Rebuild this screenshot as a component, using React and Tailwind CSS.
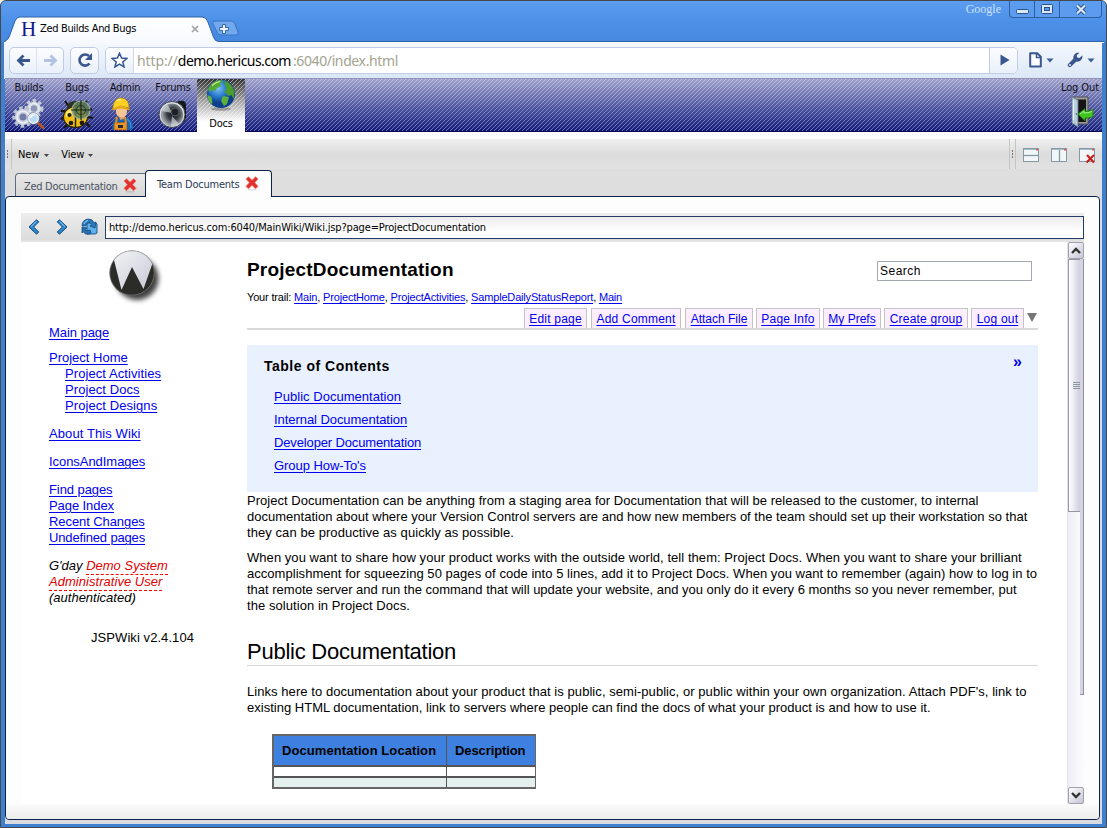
import React from 'react';

/* ---------- icons ---------- */

function Gears() {
  return (
    <svg width="34" height="32" viewBox="0 0 34 32">
      <circle cx="22" cy="10.500" r="7.200" fill="none" stroke="#c3cad8" strokeWidth="4.500" strokeDasharray="3 2.400" />
      <circle cx="22" cy="10.500" r="5" fill="#8c95b4" stroke="#d3d9e4" strokeWidth="3.600" />
      <circle cx="22" cy="10.500" r="5" fill="none" stroke="#f1f4f8" strokeWidth="1" />
      <circle cx="11" cy="19" r="8.600" fill="none" stroke="#b9c1d1" strokeWidth="4.500" strokeDasharray="3.400 2.700" />
      <circle cx="11" cy="19" r="5.800" fill="#727ca8" stroke="#cdd4e0" strokeWidth="4.600" />
      <circle cx="11" cy="19" r="6" fill="none" stroke="#f1f4f8" strokeWidth="1.200" />
      <path d="M25.500 24.500l5.500 5" stroke="#b0562a" strokeWidth="3" strokeLinecap="round" />
      <circle cx="21.500" cy="20.500" r="5" fill="#b9dcf5" stroke="#f4f7fa" strokeWidth="1.600" />
      <circle cx="21.500" cy="20.500" r="5.900" fill="none" stroke="#5d6480" strokeWidth=".5" />
      <path d="M18.500 20a3 3 0 0 1 4-2.500" stroke="#fff" strokeWidth="1.400" fill="none" />
    </svg>
  );
}

function Ladybug() {
  return (
    <svg width="34" height="32" viewBox="0 0 34 32">
      <path d="M5 3l4 6M27 3l-3 4M1 13h7M1 21l6-2M4 30l5-5M26 25l4 4M28 19l5 1M28 12l4-1" stroke="#15150c" strokeWidth="2" fill="none" />
      <ellipse cx="15" cy="9" rx="8" ry="6" fill="#2c3524" />
      <ellipse cx="15.500" cy="19" rx="12" ry="10.500" fill="#f0be16" stroke="#2d260b" strokeWidth="1.200" />
      <path d="M6 15c2-4 6-5 8-4v6l-8 2z" fill="#fbe973" />
      <path d="M15.500 8v22" stroke="#262009" strokeWidth="1.500" />
      <circle cx="9.500" cy="17" r="2.100" fill="#211c09" />
      <circle cx="11" cy="25" r="2.300" fill="#211c09" />
      <circle cx="22" cy="25" r="2.400" fill="#211c09" />
      <circle cx="21" cy="12" r="9" fill="#5f8058" fillOpacity=".85" stroke="#9db396" strokeWidth="1.200" />
      <path d="M21 2v20M11 12h20" stroke="#18200f" strokeWidth="1.100" />
      <circle cx="21" cy="12" r="4.500" fill="none" stroke="#263521" strokeWidth="1.100" />
    </svg>
  );
}

function Worker() {
  return (
    <svg className="-ml-[6px]" width="24" height="34" viewBox="0 0 24 34">
      <path d="M2 33c0-8 2-12 7-13h7c5 1 7 6 7 11l-2 2z" fill="#1763b5" />
      <path d="M17 22q4 3 4 9" stroke="#3f8fdc" strokeWidth="1.200" fill="none" />
      <path d="M4 26l13-1v8H4z" fill="#e8952c" stroke="#8a4a12" strokeWidth=".6" />
      <path d="M7 20l-1 6M15 20l1 6" stroke="#e08b24" strokeWidth="2" />
      <path d="M8 28h5v3H8z" fill="#2a2a33" />
      <path d="M9 18h6l-1 4-4 1z" fill="#dd9a60" />
      <ellipse cx="11.500" cy="14" rx="5.600" ry="6.600" fill="#f5c596" />
      <path d="M3 12C3 4 7 1 11 1s8 3 8 10l-8-2z" fill="#fbd025" stroke="#b98606" strokeWidth=".7" />
      <path d="M2 12q9-5 18 0l-1 1.500q-8-4-16 0z" fill="#e8a90d" />
      <path d="M7 4q2-2 4-1.500" stroke="#fff3a0" strokeWidth="1.500" fill="none" />
    </svg>
  );
}

function Speaker() {
  return (
    <svg width="32" height="30" viewBox="0 0 32 30">
      <defs>
        <radialGradient id="cone" cx=".55" cy=".45">
          <stop offset="0" stopColor="#0b0d10" />
          <stop offset=".55" stopColor="#3a4046" />
          <stop offset="1" stopColor="#9ca3a9" />
        </radialGradient>
      </defs>
      <path d="M20 3c4-2 9-2 9 3v11c0 5-4 8-9 7z" fill="#14171b" />
      <ellipse cx="15" cy="15.500" rx="13" ry="13" fill="#dfe3e5" stroke="#41474d" strokeWidth="1" />
      <ellipse cx="15" cy="16" rx="11.200" ry="11.400" fill="url(#cone)" />
      <path d="M15 14L5 12q2-5 6-6z" fill="#e3e7ea" fillOpacity=".6" />
      <path d="M15 17l7 8q-4 3-8 2z" fill="#e3e7ea" fillOpacity=".6" />
      <circle cx="18" cy="13" r="4" fill="#1c2025" stroke="#6e767d" strokeWidth=".7" />
    </svg>
  );
}

function Globe() {
  return (
    <svg width="32" height="32" viewBox="0 0 32 32">
      <defs>
        <radialGradient id="sea" cx=".4" cy=".3">
          <stop offset="0" stopColor="#7cc3f5" />
          <stop offset=".6" stopColor="#2878cd" />
          <stop offset="1" stopColor="#0d3f8b" />
        </radialGradient>
      </defs>
      <ellipse cx="16" cy="30" rx="10" ry="1.800" fill="#000" fillOpacity=".25" />
      <circle cx="16" cy="15" r="14" fill="url(#sea)" />
      <path d="M3 10q4-8 12-9l3 1-3 3 1 2-4 2-2 3-3-1-2 2z" fill="#54a836" />
      <path d="M20 2q8 3 9.500 11l-1 7-2-4-3 1-4-4 2-4-2-4z" fill="#4a9c30" />
      <path d="M18 17l6 1-2 7-3 2-3-5z" fill="#5db13c" />
      <path d="M2.500 16l4 2 1 6-1 1q-4-4-4-9z" fill="#62b544" />
      <path d="M7 6.500q4-3.500 8-4" stroke="#c9f08c" strokeWidth="1.200" fill="none" />
    </svg>
  );
}

function Door() {
  return (
    <svg width="24" height="32" viewBox="0 0 24 32">
      <path d="M1 1h16v27H7z" fill="#9b9b9b" stroke="#555" strokeWidth="1" />
      <path d="M4 3.500h11V26H7z" fill="#151515" />
      <path d="M1 1l6 3v27l-6-4z" fill="#b5cddc" stroke="#5f7685" strokeWidth=".8" />
      <path d="M2.500 4v20" stroke="#e9f4fa" strokeWidth="1.200" />
      <circle cx="5.500" cy="18" r=".8" fill="#39505f" />
      <path d="M7 18l7-5.500v3q5 0 8-2v7q-4 2-8 1.500v3z" fill="#3fc41f" stroke="#1d7d0a" strokeWidth=".8" />
      <path d="M9 18l4-3v2q4 0 8-1.500" stroke="#a7f08a" strokeWidth="1" fill="none" />
    </svg>
  );
}

function RedCross() {
  return (
    <svg width="14" height="15" viewBox="0 0 14 15" className="shrink-0">
      <ellipse cx="7" cy="13.800" rx="4.500" ry=".8" fill="#000" fillOpacity=".12" />
      <path d="M1 3L3.500.8 7 4.300 10.600.8 13 3 9.700 6.700 13 10.300 10.600 12.800 7 9.300 3.400 12.800 1 10.300 4.400 6.700z" fill="#e2302c" stroke="#f0706a" strokeWidth=".8" />
    </svg>
  );
}

function Chevron({ flip }) {
  return (
    <svg width="12" height="16" viewBox="0 0 12 16" className={flip ? '-scale-x-100' : ''}>
      <path d="M8.500.8l2.300 2L5.600 8l5.200 5-2.300 2.200L1 8z" fill="#2f86cb" stroke="#154a7e" strokeWidth="1" />
      <path d="M8.500 2.300L3 7.600" stroke="#8fcdf5" strokeWidth="1" />
    </svg>
  );
}

function RefreshPages() {
  return (
    <svg width="17" height="17" viewBox="0 0 17 17">
      <path d="M6 5h9l1 1v9l-2 1H6z" fill="#5fb0e6" stroke="#1b5b94" strokeWidth="1" />
      <path d="M1 8q0-6 6-7 5 0 6 4l2-1-1 6-5-2 2-1.500Q9 3.500 7 4.500 5 5 5 8z" fill="#2a79bb" stroke="#144c80" strokeWidth=".8" />
      <path d="M1 9l5 1-2 1.500q2 2 5 .5l1 3q-5 3-8-1.500L1 15z" fill="#256fb0" stroke="#144c80" strokeWidth=".8" />
      <path d="M3 6q1-3 4-3.500" stroke="#9dd8f8" strokeWidth="1" fill="none" />
    </svg>
  );
}

function WindowIcon({ kind }) {
  return (
    <svg width="18" height="16" viewBox="0 0 18 16">
      <rect x=".5" y=".5" width="15" height="13" fill="#f2f6f8" stroke="#8298a5" />
      <path d="M1 1h14v1H1z" fill="#a9bcc7" />
      <path d="M13 1h2v1.500h-2z" fill="#e0523e" />
      {kind === 'rows' && <path d="M1 7.500h14" stroke="#8298a5" strokeWidth="1.300" />}
      {kind === 'cols' && <path d="M8.500 2v11" stroke="#8298a5" strokeWidth="1.300" />}
      {kind === 'close' && <path d="M8 7l7 7.500M15 7l-7.500 7.500" stroke="#c8201c" strokeWidth="2.200" />}
    </svg>
  );
}

function WikiLogo() {
  return (
    <svg width="58" height="58" viewBox="0 0 58 58">
      <defs>
        <filter id="soft" x="-20%" y="-20%" width="150%" height="150%"><feGaussianBlur stdDeviation="2.400" /></filter>
        <linearGradient id="steel" x1="0" y1="0" x2="1" y2="1">
          <stop offset="0" stopColor="#fafafc" />
          <stop offset="1" stopColor="#c3c5d2" />
        </linearGradient>
        <clipPath id="disc"><circle cx="25" cy="24" r="22.500" /></clipPath>
      </defs>
      <circle cx="30" cy="29.500" r="21.500" fill="#000" fillOpacity=".75" filter="url(#soft)" />
      <circle cx="25" cy="24" r="22.500" fill="#2b2b28" />
      <g clipPath="url(#disc)">
        <path d="M0-2h50V9l-3 1L36.500 40 25 18 14.500 41 7 11 3 10z" fill="url(#steel)" />
      </g>
      <circle cx="25" cy="24" r="22.200" fill="none" stroke="#8f8f92" strokeWidth=".6" />
    </svg>
  );
}

/* ---------- browser chrome ---------- */

function TitleBar() {
  return (
    <div className="relative flex h-[41px] items-start justify-between rounded-t-[5px] bg-linear-to-b from-[#5c9df0] via-[#4c90e8] to-[#4688df]">
      <svg className="absolute left-[3px] top-[15px]" width="1100" height="27" viewBox="0 0 1100 27">
        <defs>
          <linearGradient id="tabfill" x1="0" y1="0" x2="0" y2="1">
            <stop offset="0" stopColor="#ffffff" />
            <stop offset="1" stopColor="#f6f9fe" />
          </linearGradient>
        </defs>
        <path d="M1 27v-2q3-1 4.500-5L11 5q1.500-4 5-4h182q4 0 5.500 4l6 16q1.500 4.500 5 4.500H1100V27z" fill="url(#tabfill)" stroke="#2d63a8" strokeWidth="1" />
        <path d="M0 26.500h1100" stroke="#f6f9fe" strokeWidth="1" />
        <path d="M209 8q-1-3 2-3h16q3 0 4 3l3 8q1 3-2 3h-15q-3 0-4-3z" fill="#71a8ee" stroke="#3a74c0" />
      </svg>
      <div className="relative flex h-[41px] items-center pl-[20px] pt-[15px]">
        <span className="w-[19px] font-[family-name:'Liberation_Serif',serif] text-[21px] leading-[20px] text-[#16188a]">H</span>
        <span className="w-[151px] whitespace-nowrap pt-px text-[11px] tracking-[-0.34px] text-black">Zed Builds And Bugs</span>
        <svg width="8" height="8" viewBox="0 0 8 8"><path d="M1 1l6 6M7 1L1 7" stroke="#a3a3a3" strokeWidth="1.700" /></svg>
        <svg className="ml-[20px]" width="10" height="10" viewBox="0 0 10 10">
          <path d="M3.500.5h3v3h3v3h-3v3h-3v-3h-3v-3h3z" fill="#e8f1fc" stroke="#3369ab" />
        </svg>
      </div>
      <div className="relative flex">
        <span className="pr-[8px] font-[family-name:'Liberation_Serif',serif] text-[12px] leading-4 text-[#cfe0f8]">Google</span>
        <div className="mr-[4px] flex h-[17px] rounded-b-[4px] border border-t-0 border-[#2f5f9f] bg-[#5c9cee]">
          <div className="flex w-[25px] items-end justify-center border-r border-[#2f5f9f] pb-[3px]">
            <svg width="13" height="5" viewBox="0 0 13 5"><rect x=".5" y=".5" width="12" height="4" rx="1" fill="#dbe8fa" stroke="#2b5288" /></svg>
          </div>
          <div className="flex w-[25px] items-center justify-center border-r border-[#2f5f9f]">
            <svg width="12" height="10" viewBox="0 0 12 10"><rect x=".5" y=".5" width="11" height="9" rx="1" fill="#dbe8fa" stroke="#2b5288" /><rect x="3.500" y="3.500" width="5" height="3" fill="#5c9cee" stroke="#2b5288" /></svg>
          </div>
          <div className="flex w-[41px] items-center justify-center">
            <svg width="12" height="11" viewBox="0 0 12 11"><path d="M2 1.500l8 8M10 1.500l-8 8" stroke="#2b5288" strokeWidth="4" /><path d="M2 1.500l8 8M10 1.500l-8 8" stroke="#dbe8fa" strokeWidth="2.200" /></svg>
          </div>
        </div>
      </div>
    </div>
  );
}

function Caret() {
  return <svg width="8" height="5" viewBox="0 0 8 5"><path d="M.5.500h7L4 4.500z" fill="#3b5d97" /></svg>;
}

function AddressBar() {
  return (
    <div className="flex h-[37px] items-center bg-linear-to-b from-[#f6f9fe] to-[#dbe7f6] pb-px pl-[5px]">
      <div className="flex h-[27px] w-[55px] rounded-[5px] border border-[#c0cbe4] bg-linear-to-b from-[#fcfdff] to-[#eaf0fa]">
        <div className="flex w-[27px] items-center justify-center border-r border-[#dbe2f1]">
          <svg width="15" height="13" viewBox="0 0 15 13"><path d="M14 6.500H3M7.500 1.500L2.500 6.500l5 5" stroke="#39568f" strokeWidth="2.800" fill="none" /></svg>
        </div>
        <div className="flex flex-1 items-center justify-center">
          <svg width="15" height="13" viewBox="0 0 15 13"><path d="M1 6.500h11M7.500 1.500l5 5-5 5" stroke="#b1c2e2" strokeWidth="2.800" fill="none" /></svg>
        </div>
      </div>
      <div className="ml-[6px] flex h-[27px] w-[29px] items-center justify-center rounded-[5px] border border-[#c0cbe4] bg-linear-to-b from-[#fcfdff] to-[#eaf0fa]">
        <svg width="16" height="16" viewBox="0 0 16 16"><path d="M12.500 11.500A5.600 5.600 0 1 1 12 4" stroke="#39568f" strokeWidth="2.600" fill="none" /><path d="M15 1v7H8z" fill="#39568f" /></svg>
      </div>
      <div className="ml-[6px] flex h-[27px] w-[913px] overflow-hidden rounded-[5px] border border-[#c0cbe4] bg-white">
        <div className="flex w-[28px] items-center justify-center border-r border-[#d0d8ea] bg-linear-to-b from-[#fcfdff] to-[#eaf0fa]">
          <svg width="17" height="16" viewBox="0 0 17 16"><path d="M8.500 1.200l2.100 4.900 5.200.4-4 3.400 1.300 5.100-4.600-2.800L3.900 15l1.300-5.100-4-3.400 5.200-.4z" fill="#fff" stroke="#39568f" strokeWidth="1.500" /></svg>
        </div>
        <div className="flex-1 whitespace-nowrap pl-[3px] font-[family-name:'Noto_Sans',sans-serif] text-[14px] leading-[25px]">
          <span className="tracking-[-0.1px] text-[#a3a390]">http://</span>
          <span className="tracking-[-0.55px] text-black">demo.hericus.com</span>
          <span className="pl-[2px] tracking-[-0.38px] text-[#a3a390]">:6040/index.html</span>
        </div>
        <div className="flex w-[28px] items-center justify-center border-l border-[#c0cbe4] bg-linear-to-b from-[#fcfdff] to-[#eaf0fa] pl-[2px]">
          <svg width="10" height="12" viewBox="0 0 10 12"><path d="M.5.500L9.500 6l-9 5.500z" fill="#39568f" /></svg>
        </div>
      </div>
      <div className="ml-[11px] flex items-center gap-[4px]">
        <svg width="13" height="16" viewBox="0 0 13 16"><path d="M1.200 1.200h7l3.600 3.600v9.700H1.200z" fill="#fff" stroke="#39568f" strokeWidth="2" strokeLinejoin="round" /><path d="M7.500 1.500v4h4" stroke="#39568f" strokeWidth="1.500" fill="none" /></svg>
        <Caret />
      </div>
      <div className="ml-[13px] flex items-center gap-[4px]">
        <svg width="16" height="16" viewBox="0 0 16 16"><path d="M2.800 13.200L9 7" stroke="#39568f" strokeWidth="4" strokeLinecap="round" /><path d="M12.500.8A5 5 0 0 0 6.500 7l2.500 2.500A5 5 0 0 0 15.300 3.500L12.500 6 10 5.500 9.800 3.300z" fill="#39568f" /><circle cx="3" cy="13" r=".9" fill="#fff" /></svg>
        <Caret />
      </div>
    </div>
  );
}

/* ---------- application ---------- */

const modules = [
  { name: 'Builds', icon: <Gears /> },
  { name: 'Bugs', icon: <Ladybug /> },
  { name: 'Admin', icon: <Worker /> },
  { name: 'Forums', icon: <Speaker /> },
];

function ModuleBar() {
  return (
    <div className="flex h-[54px] justify-between border-b border-t border-b-[#05074a] border-t-[#8f93b8] bg-[repeating-linear-gradient(135deg,rgba(255,255,255,0.36)_0,rgba(255,255,255,0.36)_0.9px,transparent_1px,transparent_2.83px),linear-gradient(#a0a2cc,#4c54a0_55%,#141d7c)]">
      <div className="flex">
        {modules.map((m) => (
          <div key={m.name} className="flex w-[48px] flex-col items-center">
            <span className="mt-[2px] text-[11px] leading-[13px] tracking-[-0.2px] text-[#101018]">{m.name}</span>
            <div className="mt-[3px] flex h-[34px] items-center">{m.icon}</div>
          </div>
        ))}
        <div className="-mb-px flex w-[48px] flex-col items-center bg-[repeating-linear-gradient(135deg,rgba(255,255,255,0.5)_0,rgba(255,255,255,0.5)_0.9px,transparent_1px,transparent_2.83px),linear-gradient(#333,#aaa_45%,#fff_80%)]">
          <Globe />
          <span className="mt-[6px] text-[11px] leading-[13px] tracking-[-0.2px] text-black">Docs</span>
        </div>
      </div>
      <div className="flex flex-col items-end pr-[3px]">
        <span className="mt-[2px] text-[11px] leading-[13px] tracking-[-0.1px] text-[#101018]">Log Out</span>
        <div className="mr-[4px] mt-[2px]"><Door /></div>
      </div>
    </div>
  );
}

function Grip() {
  return (
    <svg width="2" height="9" viewBox="0 0 2 9"><path d="M0 0h1v2H0zM0 3h1v2H0zM0 6h1v2H0z" fill="#777" /></svg>
  );
}

function MenuBar() {
  return (
    <div className="flex h-[30px] items-center bg-linear-to-b from-[#f0f0f0] from-0% via-[#dcdcdc] via-50% to-[#e2e2e2] text-[11px] tracking-[-0.1px] text-black">
      <div className="flex h-full w-[7px] items-center justify-center border-r border-[#c4c4c4]"><Grip /></div>
      <div className="flex items-center pl-[6px] pt-[3px]">
        <span>New</span>
        <svg className="ml-[5px]" width="5" height="4" viewBox="0 0 5 4"><path d="M0 0h5L2.500 3z" fill="#444" /></svg>
        <span className="ml-[12px]">View</span>
        <svg className="ml-[4px]" width="5" height="4" viewBox="0 0 5 4"><path d="M0 0h5L2.500 3z" fill="#444" /></svg>
      </div>
      <div className="ml-auto flex h-full w-[7px] items-center justify-center border-x border-[#c4c4c4]"><Grip /></div>
      <div className="flex w-[86px] items-center gap-[10px] pl-[7px] pt-[3px]">
        <WindowIcon kind="rows" />
        <WindowIcon kind="cols" />
        <WindowIcon kind="close" />
      </div>
    </div>
  );
}

function DocTabs() {
  return (
    <div className="flex h-[27px] items-end bg-[#dedede] pl-[10px] text-[11px] text-[#2c3a55]">
      <div className="flex h-[23px] w-[130px] rounded-tl-[4px] border border-b-0 border-r-0 border-[#5f6c80] bg-linear-to-b from-[#e9e9e9] to-[#d6d6d6] pl-[8px] pt-[4px]">
        <span className="w-[99px] whitespace-nowrap leading-[17px] tracking-[-0.3px] text-[#4b5363]">Zed Documentation</span>
        <RedCross />
      </div>
      <div className="relative -mb-px flex h-[27px] w-[127px] rounded-t-[4px] border border-b-0 border-[#0c2349] bg-[#fdfdfd] pl-[11px] pt-[5px]">
        <span className="w-[88px] whitespace-nowrap leading-[17px] tracking-[-0.22px]">Team Documents</span>
        <RedCross />
      </div>
    </div>
  );
}

/* ---------- wiki page ---------- */

function A({ children }) {
  return <a className="text-[#0000ee] underline decoration-1 underline-offset-2">{children}</a>;
}

function Sidebar() {
  return (
    <div className="w-[226px] whitespace-nowrap pl-[28px] pt-[7px] text-[13px] leading-[16px] text-black">
      <div className="pl-[58px]"><WikiLogo /></div>
      <div className="mt-[18px] tracking-[-0.06px]"><A>Main page</A></div>
      <div className="mt-[9px]"><A>Project Home</A></div>
      <div className="pl-[16px] tracking-[0.08px]">
        <div><A>Project Activities</A></div>
        <div><A>Project Docs</A></div>
        <div><A>Project Designs</A></div>
      </div>
      <div className="mt-[12px] tracking-[0.1px]"><A>About This Wiki</A></div>
      <div className="mt-[12px] tracking-[-0.05px]"><A>IconsAndImages</A></div>
      <div className="mt-[12px] tracking-[-0.08px]">
        <div><A>Find pages</A></div>
        <div><A>Page Index</A></div>
        <div><A>Recent Changes</A></div>
        <div className="tracking-[-0.15px]"><A>Undefined pages</A></div>
      </div>
      <div className="mt-[12px] italic">
        <div>G'day <span className="border-b border-dashed border-[#f00] pb-px text-[#e00000]">Demo System</span></div>
        <div><span className="border-b border-dashed border-[#f00] pb-px tracking-[0.04px] text-[#e00000]">Administrative User</span></div>
        <div>(authenticated)</div>
      </div>
      <div className="mt-[24px] pl-[42px] tracking-[0.07px]">JSPWiki v2.4.104</div>
    </div>
  );
}

function PageTab({ children, className }) {
  return (
    <div className={`flex justify-center border border-b-0 border-[#c3c3c3] bg-[#fdeeff] pt-[2px] leading-[16px] ${className}`}>
      <A>{children}</A>
    </div>
  );
}

function Actions() {
  return (
    <div className="flex h-[22px] items-stretch justify-end whitespace-nowrap border-b-2 border-[#d9d9d9] text-[12px] tracking-[0.22px]">
      <PageTab className="mr-[4px] w-[63px]">Edit page</PageTab>
      <PageTab className="mr-[4px] w-[90px]">Add Comment</PageTab>
      <PageTab className="mr-[3px] w-[68px] tracking-[0]">Attach File</PageTab>
      <PageTab className="mr-[3px] w-[64px]">Page Info</PageTab>
      <PageTab className="mr-[3px] w-[58px] tracking-[0]">My Prefs</PageTab>
      <PageTab className="mr-[3px] w-[84px]">Create group</PageTab>
      <PageTab className="w-[53px]">Log out</PageTab>
      <svg className="ml-[3px] mr-px mt-[5px]" width="10" height="9" viewBox="0 0 10 9"><path d="M0 0h10L5 9z" fill="#777" /></svg>
    </div>
  );
}

function Article() {
  return (
    <div className="w-[791px] whitespace-nowrap pt-[17px] text-[13px] leading-[16px] text-black">
      <div className="flex justify-between">
        <h1 className="text-[19px] font-bold leading-[22px] tracking-[0.2px]">ProjectDocumentation</h1>
        <div className="mr-[6px] mt-[2px] h-[20px] w-[155px] border border-[#a3a9b3] bg-white pl-[2px] text-[12px] leading-[19px] tracking-[0.5px]">Search</div>
      </div>
      <div className="mt-[9px] text-[11px] leading-[14px] tracking-[-0.17px]">
        Your trail: <A>Main</A>, <A>ProjectHome</A>, <A>ProjectActivities</A>, <A>SampleDailyStatusReport</A>, <A>Main</A>
      </div>
      <div className="mt-[4px]"><Actions /></div>
      <div className="mt-[15px] h-[147px] bg-[#eaf1fe] pl-[17px] pr-[16px] pt-[12px]">
        <div className="flex justify-between">
          <h4 className="text-[14px] font-bold leading-[18px] tracking-[0.5px]">Table of Contents</h4>
          <span className="text-[16px] font-bold leading-[10px] text-[#0000ee]">»</span>
        </div>
        <div className="ml-[10px] mt-[10px] flex flex-col leading-[23px] tracking-[-0.06px]">
          <div className="tracking-[0.03px]"><A>Public Documentation</A></div>
          <div><A>Internal Documentation</A></div>
          <div className="tracking-[-0.14px]"><A>Developer Documentation</A></div>
          <div><A>Group How-To's</A></div>
        </div>
      </div>
      <div className="pt-px tracking-[0.03px]">
        <div>Project Documentation can be anything from a staging area for Documentation that will be released to the customer, to internal</div>
        <div className="tracking-[0.01px]">documentation about where your Version Control servers are and how new members of the team should set up their workstation so that</div>
        <div className="tracking-[0.07px]">they can be productive as quickly as possible.</div>
      </div>
      <div className="mt-[9px]">
        <div className="tracking-[0.05px]">When you want to share how your product works with the outside world, tell them: Project Docs. When you want to share your brilliant</div>
        <div className="tracking-[0.04px]">accomplishment for squeezing 50 pages of code into 5 lines, add it to Project Docs. When you want to remember (again) how to log in to</div>
        <div>that remote server and run the command that will update your website, and you only do it every 6 months so you never remember, put</div>
        <div className="tracking-[0.06px]">the solution in Project Docs.</div>
      </div>
      <h2 className="mt-[24px] h-[28px] border-b border-[#d5d5d5] text-[22px] leading-[28px] tracking-[-0.25px]">Public Documentation</h2>
      <div className="mt-[18px]">
        <div className="tracking-[0.06px]">Links here to documentation about your product that is public, semi-public, or public within your own organization. Attach PDF's, link to</div>
        <div className="tracking-[0.01px]">existing HTML documentation, link to servers where people can find the docs of what your product is and how to use it.</div>
      </div>
      <div className="ml-[25px] mt-[18px] grid w-[264px] grid-cols-[172px_88px] grid-rows-[29px_9px_9px] gap-x-px gap-y-[2px] border-2 border-r-[1px] border-[#666] bg-[#555] tracking-[0.08px]">
        <div className="bg-[#3d80df] pl-[8px] font-bold leading-[29px]">Documentation Location</div>
        <div className="bg-[#3d80df] pl-[8px] font-bold leading-[29px] tracking-[-0.1px]">Description</div>
        <div className="bg-white" />
        <div className="bg-white" />
        <div className="bg-[#e4f0ee]" />
        <div className="bg-[#e4f0ee]" />
      </div>
    </div>
  );
}

function ScrollButton({ down }) {
  return (
    <div className="flex h-[17px] w-[16px] shrink-0 items-center justify-center rounded-[2px] border border-[#a0a0ae] bg-linear-to-br from-white to-[#c5c5d6]">
      <svg width="10" height="7" viewBox="0 0 10 7" className={down ? '' : '-scale-y-100'}><path d="M1 1l4 4 4-4" stroke="#333" strokeWidth="2.400" fill="none" /></svg>
    </div>
  );
}

function ScrollBar() {
  return (
    <div className="flex w-[17px] flex-col border-l border-[#e3e3ee] bg-linear-to-r from-[#eeeef6] to-[#fbfbff]">
      <ScrollButton />
      <div className="flex flex-1 items-start justify-between">
        <div className="flex h-[253px] w-[12px] items-center justify-end border border-r-0 border-[#9595a6] bg-linear-to-r from-white to-[#cfcfdf]">
          <svg width="7" height="8" viewBox="0 0 7 8"><path d="M0 .5h7M0 2.500h7M0 4.500h7M0 6.500h7" stroke="#8b97a3" /></svg>
        </div>
        <div className="h-[436px] w-[4px] border-b border-r border-[#9090a0] bg-[#d4d4e2]" />
      </div>
      <ScrollButton down />
    </div>
  );
}

function DocumentPanel() {
  return (
    <div className="mr-[2px] flex h-[624px] shrink-0 flex-col rounded-[4px] border border-[#0c2349] bg-[#fdfdfd] pt-[16px]">
      <div className="ml-[15px] flex h-[29px] w-[1063px] shrink-0 items-center border-b-2 border-[#e2e2e2] bg-linear-to-b from-[#ededed] to-[#dcdcdc] pl-[7px]">
        <Chevron />
        <div className="ml-[16px]"><Chevron flip /></div>
        <div className="ml-[13px]"><RefreshPages /></div>
        <div className="ml-[7px] mt-px h-[23px] flex-1 whitespace-nowrap border border-[#263c66] bg-linear-to-b from-[#ececec] to-white to-70% pl-[3px] text-[11px] leading-[22px] tracking-[-0.15px] text-black">
          http://demo.hericus.com:6040/MainWiki/Wiki.jsp?page=ProjectDocumentation
        </div>
      </div>
      <div className="ml-[15px] flex h-[562px] w-[1063px] shrink-0 justify-between bg-white font-[family-name:'Liberation_Sans',Arial,sans-serif]">
        <div className="flex">
          <Sidebar />
          <Article />
        </div>
        <ScrollBar />
      </div>
      <div className="flex-1 rounded-b-[4px] bg-linear-to-b from-[#fbfbfb] to-[#ececec]" />
    </div>
  );
}

export default function App() {
  return (
    <div className="h-[828px] w-[1107px] overflow-hidden bg-[#f4f4f4] font-[family-name:'DejaVu_Sans_Condensed','DejaVu_Sans',sans-serif]">
      <div className="flex h-full flex-col rounded-t-[6px] border border-[#45484d] bg-[#3f7fcf]">
        <TitleBar />
        <div className="ml-[3px] mr-[4px] flex flex-col bg-white">
          <AddressBar />
        </div>
        <div className="ml-[4px] mr-[4px] -mt-px flex flex-1 flex-col bg-[#d9dbe0]">
          <ModuleBar />
          <div className="h-[7px] bg-white" />
          <MenuBar />
          <DocTabs />
          <DocumentPanel />
        </div>
        <div className="h-[3px] shrink-0" />
      </div>
    </div>
  );
}
